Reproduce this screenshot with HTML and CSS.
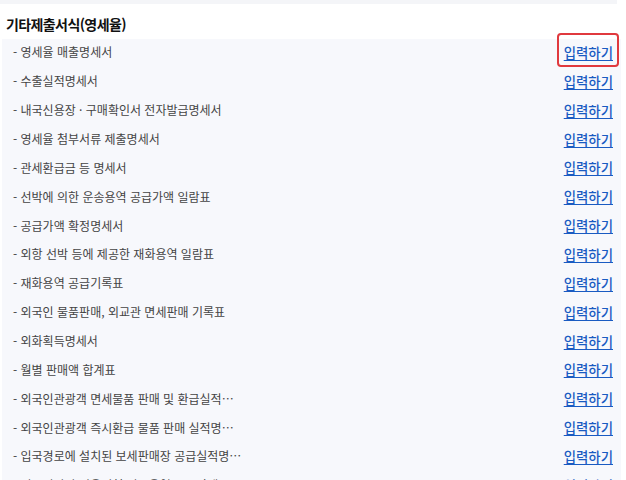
FILE: index.html
```html
<!DOCTYPE html>
<html lang="ko">
<head>
<meta charset="utf-8">
<link rel="stylesheet" href="styles.css">
</head>
<body>
<div class="page">
  <div class="topbar"></div>
  <h2 class="title">기타제출서식(영세율)</h2>
  <ul class="list">
    <li class="row"><span class="name">- 영세율 매출명세서</span><a class="link first" href="#">입력하기</a></li>
    <li class="row"><span class="name">- 수출실적명세서</span><a class="link" href="#">입력하기</a></li>
    <li class="row"><span class="name">- 내국신용장 · 구매확인서 전자발급명세서</span><a class="link" href="#">입력하기</a></li>
    <li class="row"><span class="name">- 영세율 첨부서류 제출명세서</span><a class="link" href="#">입력하기</a></li>
    <li class="row"><span class="name">- 관세환급금 등 명세서</span><a class="link" href="#">입력하기</a></li>
    <li class="row"><span class="name">- 선박에 의한 운송용역 공급가액 일람표</span><a class="link" href="#">입력하기</a></li>
    <li class="row"><span class="name">- 공급가액 확정명세서</span><a class="link" href="#">입력하기</a></li>
    <li class="row"><span class="name">- 외항 선박 등에 제공한 재화용역 일람표</span><a class="link" href="#">입력하기</a></li>
    <li class="row"><span class="name">- 재화용역 공급기록표</span><a class="link" href="#">입력하기</a></li>
    <li class="row"><span class="name">- 외국인 물품판매, 외교관 면세판매 기록표</span><a class="link" href="#">입력하기</a></li>
    <li class="row"><span class="name">- 외화획득명세서</span><a class="link" href="#">입력하기</a></li>
    <li class="row"><span class="name">- 월별 판매액 합계표</span><a class="link" href="#">입력하기</a></li>
    <li class="row"><span class="name">- 외국인관광객 면세물품 판매 및 환급실적…</span><a class="link" href="#">입력하기</a></li>
    <li class="row"><span class="name">- 외국인관광객 즉시환급 물품 판매 실적명…</span><a class="link" href="#">입력하기</a></li>
    <li class="row"><span class="name">- 입국경로에 설치된 보세판매장 공급실적명…</span><a class="link" href="#">입력하기</a></li>
    <li class="row"><span class="name">- 외국인관광 미용성형 의료용역 공급가액…</span><a class="link" href="#">입력하기</a></li>
  </ul>
</div>
</body>
</html>
```

FILE: styles.css
```css
html, body {
  margin: 0;
  padding: 0;
  background: #ffffff;
  overflow: hidden;
}
.page {
  width: 626px;
  height: 480px;
  overflow: hidden;
  font-family: "Noto Sans CJK KR", "Noto Sans", sans-serif;
}
.topbar {
  width: 617px;
  height: 4px;
  background: #f4f5f8;
}
.title {
  margin: 0;
  height: 35px;
  padding-left: 6px;
  font-size: 14px;
  font-weight: 700;
  color: #111111;
  letter-spacing: -0.6px;
  line-height: 40px;
}
.list {
  list-style: none;
  margin: 0 0 0 2px;
  padding: 0;
  width: 619px;
  background: #f7f8fc;
}
.row {
  height: 28.86px;
  display: flex;
  align-items: center;
  justify-content: space-between;
  padding: 0 8px 3px 11px;
  box-sizing: border-box;
}
.name {
  font-size: 12px;
  letter-spacing: 0;
  color: #444444;
  white-space: nowrap;
}
.link {
  position: relative;
  font-size: 13.4px;
  font-weight: 500;
  letter-spacing: 0;
  color: #1a5bc2;
  text-decoration: underline;
  text-underline-offset: 2px;
  white-space: nowrap;
}
.link.first::after {
  content: "";
  position: absolute;
  left: -7px;
  right: -6px;
  top: -9px;
  bottom: -5px;
  border: 2.5px solid #e0393e;
  border-radius: 4px;
}
```
